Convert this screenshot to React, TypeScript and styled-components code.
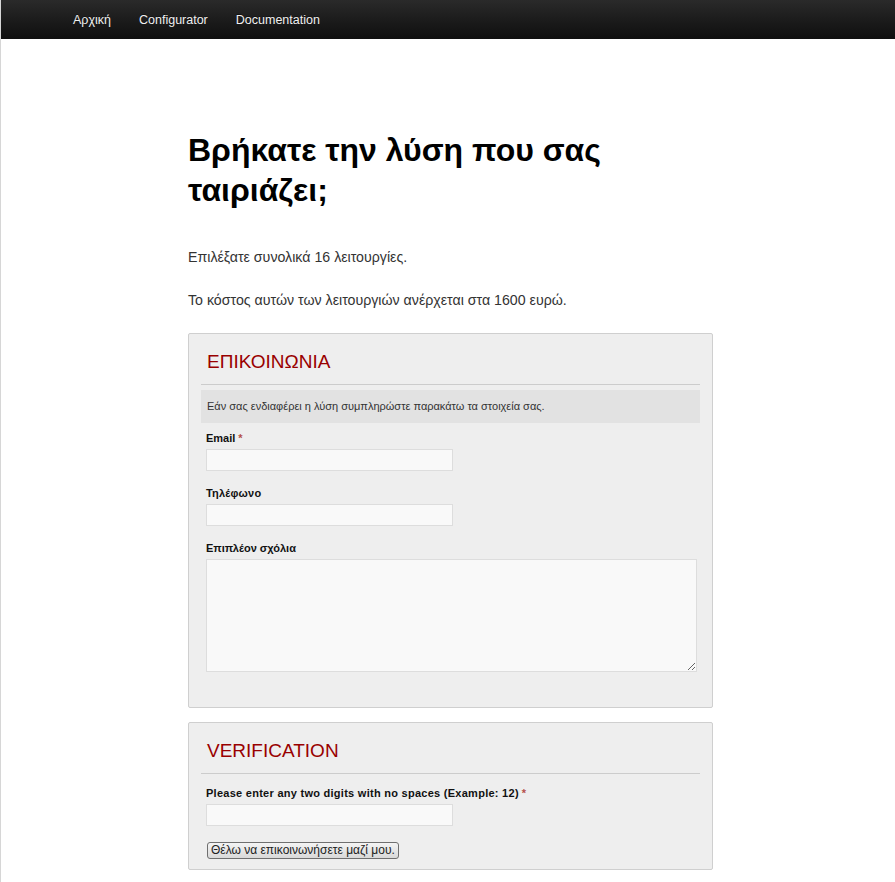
import React from "react";
import styled, { createGlobalStyle } from "styled-components";

const Global = createGlobalStyle`
  html, body { margin: 0; padding: 0; background: #fff; }
  body { font-family: "Liberation Sans", Arial, sans-serif; color: #333; }
  * { box-sizing: border-box; }
`;

const Page = styled.div`
  border-left: 1px solid #d6d6d6;
  min-height: 882px;
`;

const NavBar = styled.nav`
  height: 39px;
  background: linear-gradient(to bottom, #2a2a2a 0%, #1c1c1c 50%, #0f0f0f 100%);
  display: flex;
  align-items: center;
  padding: 2px 0 0 58px;
`;

const NavLink = styled.a`
  color: #f0f0f0;
  font-size: 12.5px;
  line-height: 37px;
  padding: 0 14px;
  text-decoration: none;
  text-shadow: 0 -1px 0 rgba(0, 0, 0, 0.4);
`;

const Main = styled.main`
  width: 525px;
  margin-left: calc(50% - 260px);
  padding-top: 91px;
`;

const Title = styled.h1`
  margin: 0 0 37px;
  font-size: 32px;
  line-height: 40px;
  font-weight: bold;
  color: #000;
`;

const Para = styled.p`
  margin: 0 0 23px;
  font-size: 14.2px;
  line-height: 20px;
  color: #333;
`;

const Card = styled.section<{ $bottom: number }>`
  background: #eeeeee;
  border: 1px solid #cfcfcf;
  border-radius: 2px;
  padding: 0 12px ${(p) => p.$bottom}px;
  & + & {
    margin-top: 14px;
  }
`;

const Legend = styled.div`
  padding: 17px 6px 11px;
  font-size: 19px;
  line-height: 22px;
  color: #990000;
  border-bottom: 1px solid #cccccc;
`;

const Note = styled.div`
  margin-top: 5px;
  background: #e2e2e2;
  height: 33px;
  line-height: 33px;
  padding: 0 6px;
  font-size: 11px;
  color: #333;
`;

const Field = styled.div<{ $top: number }>`
  padding-left: 5px;
  margin-top: ${(p) => p.$top}px;
  display: flex;
  flex-direction: column;
  align-items: flex-start;
`;

const Label = styled.label<{ $spacing?: number }>`
  font-size: 11px;
  line-height: 14px;
  font-weight: bold;
  color: #111;
  margin-bottom: 4px;
  letter-spacing: ${(p) => p.$spacing ?? 0}px;
`;

const Req = styled.span`
  color: #b5504a;
  font-weight: bold;
  margin-left: 3px;
`;

const TextInput = styled.input`
  width: 247px;
  height: 22px;
  background: #f9f9f9;
  border: 1px solid #dddddd;
  margin: 0;
  padding: 2px 4px;
  font-family: inherit;
  font-size: 12px;
  outline: none;
`;

const TextArea = styled.textarea`
  width: 491px;
  height: 113px;
  background: #f9f9f9;
  border: 1px solid #dddddd;
  margin: 0;
  padding: 2px 4px;
  font-family: inherit;
  font-size: 12px;
  outline: none;
  display: block;
`;

const Button = styled.button`
  margin: 16px 0 0 1px;
  height: 17px;
  padding: 0 3px;
  font-family: "Liberation Sans", Arial, sans-serif;
  font-size: 12px;
  line-height: 15px;
  color: #222;
  background: linear-gradient(to bottom, #f4f4f4 0%, #e6e6e6 50%, #d9d9d9 100%);
  border: 1px solid #6f6f6f;
  border-radius: 3px;
  cursor: pointer;
`;

export default function App() {
  return (
    <>
      <Global />
      <Page>
        <NavBar>
          <NavLink href="#">Αρχική</NavLink>
          <NavLink href="#">Configurator</NavLink>
          <NavLink href="#">Documentation</NavLink>
        </NavBar>
        <Main>
          <Title>Βρήκατε την λύση που σας ταιριάζει;</Title>
          <Para>Επιλέξατε συνολικά 16 λειτουργίες.</Para>
          <Para>Το κόστος αυτών των λειτουργιών ανέρχεται στα 1600 ευρώ.</Para>

          <Card $bottom={35}>
            <Legend>ΕΠΙΚΟΙΝΩΝΙΑ</Legend>
            <Note>Εάν σας ενδιαφέρει η λύση συμπληρώστε παρακάτω τα στοιχεία σας.</Note>
            <Field $top={8}>
              <Label>
                Email<Req>*</Req>
              </Label>
              <TextInput type="text" />
            </Field>
            <Field $top={15}>
              <Label $spacing={0.2}>Τηλέφωνο</Label>
              <TextInput type="text" />
            </Field>
            <Field $top={15}>
              <Label>Επιπλέον σχόλια</Label>
              <TextArea />
            </Field>
          </Card>

          <Card $bottom={10}>
            <Legend>VERIFICATION</Legend>
            <Field $top={12}>
              <Label $spacing={0.27}>
                Please enter any two digits with no spaces (Example: 12)<Req>*</Req>
              </Label>
              <TextInput type="text" />
              <Button type="button">Θέλω να επικοινωνήσετε μαζί μου.</Button>
            </Field>
          </Card>
        </Main>
      </Page>
    </>
  );
}
